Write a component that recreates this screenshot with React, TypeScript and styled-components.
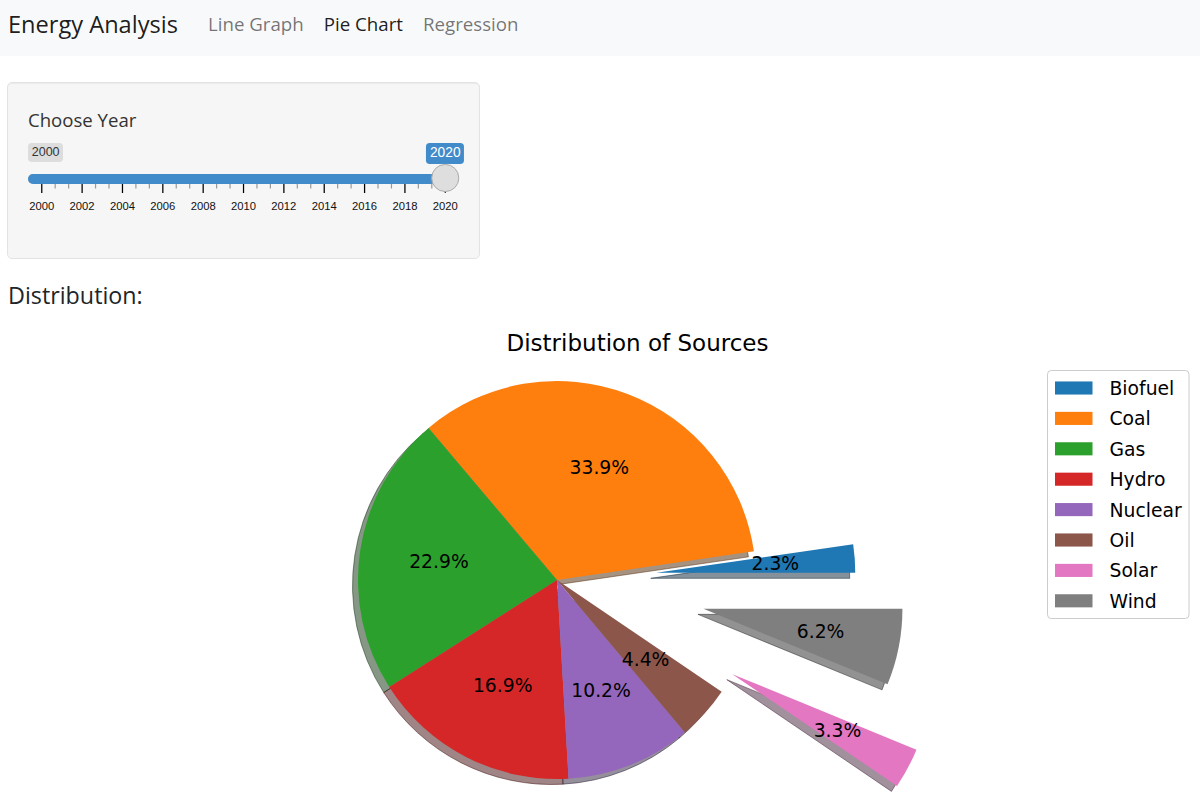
import React from "react";
import styled, { createGlobalStyle } from "styled-components";

const GlobalStyle = createGlobalStyle`
  html, body { margin: 0; padding: 0; background: #fff; overflow: hidden; }
  body { font-family: "Open Sans", "Noto Sans", sans-serif; color: #212529; }
  * { box-sizing: border-box; }
`;

const Navbar = styled.nav`
  height: 56px;
  background: #f8f9fa;
  display: flex;
  align-items: flex-start;
  padding: 9px 8px 0;
`;

const Brand = styled.a`
  font-size: 23.6px;
  line-height: 30px;
  color: rgba(0, 0, 0, 0.9);
  margin-right: 20px;
  text-decoration: none;
  white-space: nowrap;
`;

const NavList = styled.ul`
  list-style: none;
  margin: 0;
  padding: 0;
  display: flex;
`;

const NavLink = styled.a<{ $active?: boolean }>`
  display: block;
  padding: 0 10px;
  font-size: 18.7px;
  line-height: 30px;
  text-decoration: none;
  white-space: nowrap;
  color: ${(p) => (p.$active ? "rgba(0,0,0,0.9)" : "rgba(0,0,0,0.55)")};
`;

const Section = styled.section`
  padding-left: 7px;
`;

const Well = styled.div`
  width: 473px;
  margin-top: 26px;
  padding: 25px 20px 43px;
  background: #f6f6f6;
  border: 1px solid #e3e3e3;
  border-radius: 5px;
  box-shadow: inset 0 1px 1px rgba(0, 0, 0, 0.05);
`;

const Label = styled.label`
  display: block;
  font-size: 18.6px;
  line-height: 24px;
  color: #333;
  margin-bottom: 8px;
`;

const SliderWrap = styled.div`
  position: relative;
  height: 75px;
  padding-top: 3px;
  font-family: "Liberation Sans", Arial, sans-serif;
`;

const LabelsRow = styled.div`
  height: 21px;
`;

const MinLabel = styled.span`
  display: inline-block;
  vertical-align: top;
  font-size: 12.5px;
  line-height: 1.333;
  padding: 1.25px 3.75px;
  color: #333;
  background: rgba(0, 0, 0, 0.1);
  border-radius: 3.75px;
`;

const ValueLabel = styled.span`
  position: absolute;
  top: 3px;
  transform: translateX(-50%);
  font-size: 13.75px;
  line-height: 1.333;
  padding: 1.25px 3.75px;
  color: #fff;
  background: #428bca;
  border-radius: 3.75px;
  white-space: nowrap;
`;

const Line = styled.div`
  margin-top: 10px;
  height: 10px;
  border-radius: 5px;
  background: #e6e6e6;
  box-shadow: inset 0 0 0 1px #ccc;
`;

const Bar = styled.div`
  height: 100%;
  background: #428bca;
  border-radius: 5px 0 0 5px;
`;

const Handle = styled.span`
  position: absolute;
  top: 24px;
  width: 27.5px;
  height: 27.5px;
  transform: translateX(-50%);
  border: 1px solid #aaa;
  background: #dedede;
  border-radius: 50%;
  box-shadow: 1px 1px 3px rgba(255, 255, 255, 0.3);
`;

const GridSvg = styled.svg`
  display: block;
  overflow: visible;
`;

const Heading = styled.h4`
  margin: 22px 0 0 1px;
  font-size: 23.3px;
  line-height: 29px;
  font-weight: 400;
  color: #212529;
`;

const PlotSvg = styled.svg`
  display: block;
  font-family: "DejaVu Sans", sans-serif;
`;

const MIN = 2000;
const MAX = 2020;
const VALUE = 2020;
const TRACK_W = 431;
const HALF = 13.75;
const INNER = TRACK_W - 2 * HALF;
const xFor = (y: number) => HALF + ((y - MIN) / (MAX - MIN)) * INNER;

function YearSlider() {
  const majors: number[] = [];
  for (let y = MIN; y <= MAX; y += 2) majors.push(y);
  const minors: number[] = [];
  for (let y = MIN; y < MAX; y += 2) {
    minors.push(y + 2 / 3, y + 4 / 3);
  }
  const vx = xFor(VALUE);
  return (
    <SliderWrap>
      <LabelsRow>
        <MinLabel>{MIN}</MinLabel>
      </LabelsRow>
      <ValueLabel style={{ left: vx }}>{VALUE}</ValueLabel>
      <Line>
        <Bar style={{ width: vx }} />
      </Line>
      <GridSvg width={TRACK_W} height={31}>
        {minors.map((m) => (
          <rect key={m} x={xFor(m) - 0.6} y={0} width={1.2} height={4.5} fill="#999" />
        ))}
        {majors.map((m) => (
          <rect key={m} x={xFor(m) - 0.6} y={0} width={1.25} height={9} fill="#000" />
        ))}
        {majors.map((m) => (
          <text key={m} x={xFor(m)} y={26} fontSize={11.25} textAnchor="middle" fill="#111">
            {m}
          </text>
        ))}
      </GridSvg>
      <Handle style={{ left: vx }} />
    </SliderWrap>
  );
}

type Slice = { name: string; pct: number; color: string; ex: number };

const slices: Slice[] = [
  { name: "Biofuel", pct: 2.3, color: "#1f77b4", ex: 0.5 },
  { name: "Coal", pct: 33.9, color: "#ff7f0e", ex: 0 },
  { name: "Gas", pct: 22.9, color: "#2ca02c", ex: 0 },
  { name: "Hydro", pct: 16.9, color: "#d62728", ex: 0 },
  { name: "Nuclear", pct: 10.2, color: "#9467bd", ex: 0 },
  { name: "Oil", pct: 4.4, color: "#8c564b", ex: 0 },
  { name: "Solar", pct: 3.3, color: "#e377c2", ex: 1.0 },
  { name: "Wind", pct: 6.2, color: "#7f7f7f", ex: 0.75 },
];

const CX = 557;
const CY = 580;
const R = 199;
const SH = 5.5;

const shade = (hex: string) => {
  const n = parseInt(hex.slice(1), 16);
  const r = Math.round(((n >> 16) & 255) * 0.3);
  const g = Math.round(((n >> 8) & 255) * 0.3);
  const b = Math.round((n & 255) * 0.3);
  return `rgb(${r},${g},${b})`;
};

function wedgePath(t1: number, t2: number, cx: number, cy: number) {
  const a1 = (t1 * Math.PI) / 180;
  const a2 = (t2 * Math.PI) / 180;
  const x1 = cx + R * Math.cos(a1);
  const y1 = cy - R * Math.sin(a1);
  const x2 = cx + R * Math.cos(a2);
  const y2 = cy - R * Math.sin(a2);
  const large = t2 - t1 > 180 ? 1 : 0;
  return `M${cx},${cy} L${x1},${y1} A${R},${R} 0 ${large} 0 ${x2},${y2} Z`;
}

function PieChart() {
  const total = slices.reduce((s, d) => s + d.pct, 0);
  let acc = 0;
  const geo = slices.map((d) => {
    const t1 = (acc / total) * 360;
    acc += d.pct;
    const t2 = (acc / total) * 360;
    const mid = ((t1 + t2) / 2) * (Math.PI / 180);
    const ox = d.ex * R * Math.cos(mid);
    const oy = -d.ex * R * Math.sin(mid);
    const lx = CX + ox + 0.6 * R * Math.cos(mid);
    const ly = CY + oy - 0.6 * R * Math.sin(mid);
    return { ...d, t1, t2, ox, oy, lx, ly };
  });

  const legendTop = 388;
  const pitch = 30.4;

  return (
    <PlotSvg width={1200} height={498} viewBox="0 310 1200 498">
      <text x={637.5} y={350.5} fontSize={23} textAnchor="middle" fill="#000">
        Distribution of Sources
      </text>
      {geo.map((g) => (
        <path
          key={`s-${g.name}`}
          d={wedgePath(g.t1, g.t2, CX + g.ox - SH, CY + g.oy + SH)}
          fill={shade(g.color)}
          fillOpacity={0.5}
          stroke={shade(g.color)}
          strokeOpacity={0.5}
          strokeWidth={1}
        />
      ))}
      {geo.map((g) => (
        <path key={`w-${g.name}`} d={wedgePath(g.t1, g.t2, CX + g.ox, CY + g.oy)} fill={g.color} />
      ))}
      {geo.map((g) => (
        <text key={`t-${g.name}`} x={g.lx} y={g.ly + 6} fontSize={18.75} textAnchor="middle" fill="#000">
          {g.pct.toFixed(1)}%
        </text>
      ))}
      <rect
        x={1047.5}
        y={370.5}
        width={141.5}
        height={248}
        rx={3.75}
        fill="#fff"
        fillOpacity={0.8}
        stroke="#cccccc"
        strokeWidth={1}
      />
      {slices.map((d, i) => {
        const cy = legendTop + i * pitch;
        return (
          <g key={`l-${d.name}`}>
            <rect x={1055} y={cy - 6.55} width={37.5} height={13.1} fill={d.color} />
            <text x={1109.5} y={cy + 7} fontSize={18.75} fill="#000">
              {d.name}
            </text>
          </g>
        );
      })}
    </PlotSvg>
  );
}

export default function App() {
  return (
    <>
      <GlobalStyle />
      <Navbar>
        <Brand href="#">Energy Analysis</Brand>
        <NavList>
          <li>
            <NavLink href="#">Line Graph</NavLink>
          </li>
          <li>
            <NavLink href="#" $active>
              Pie Chart
            </NavLink>
          </li>
          <li>
            <NavLink href="#">Regression</NavLink>
          </li>
        </NavList>
      </Navbar>
      <Section>
        <Well>
          <Label>Choose Year</Label>
          <YearSlider />
        </Well>
        <Heading>Distribution:</Heading>
      </Section>
      <PieChart />
    </>
  );
}
